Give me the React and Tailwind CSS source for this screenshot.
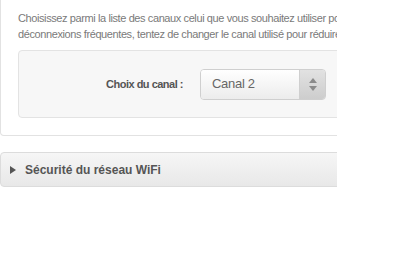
import React from 'react';

const App = () => {
  return (
    <div className="w-[400px] h-[280px] bg-white font-['Liberation_Sans',Arial,sans-serif]">
      <div className="w-[337px] overflow-hidden">
        <div className="w-[560px]">
          {/* Canal panel */}
          <div className="border border-t-0 border-[#e2e2e2] rounded-b-[4px] px-[17px] pt-[10px] pb-[17px]">
            <p className="text-[11px] tracking-[-0.4px] leading-[16px] text-[#7a7a7a] whitespace-nowrap">
              Choisissez parmi la liste des canaux celui que vous souhaitez utiliser pour votre réseau WiFi. En cas de
            </p>
            <p className="text-[11px] tracking-[-0.4px] leading-[16px] text-[#7a7a7a] whitespace-nowrap">
              déconnexions fréquentes, tentez de changer le canal utilisé pour réduire les interférences.
            </p>
            <div className="mt-[8px] h-[68px] border border-[#e3e3e3] rounded-[4px] bg-[#f7f7f7] flex items-center">
              <label className="w-[164px] text-right text-[11px] tracking-[-0.5px] font-bold text-[#555]">Choix du canal :</label>
              <div className="ml-[17px] w-[126px] h-[31px] flex border border-[#cfcfcf] rounded-[4px] overflow-hidden">
                <div className="flex-1 flex items-center pl-[11px] text-[13px] tracking-[-0.3px] text-[#666] bg-gradient-to-b from-[#ffffff] to-[#ececec]">
                  Canal 2
                </div>
                <div className="w-[26px] flex flex-col items-center justify-center gap-[3px] border-l border-[#cfcfcf] bg-gradient-to-b from-[#e2e2e2] to-[#cdcdcd]">
                  <svg width="8" height="5" viewBox="0 0 8 5"><path d="M4 0L8 5H0Z" fill="#8a8a8a" /></svg>
                  <svg width="8" height="5" viewBox="0 0 8 5"><path d="M0 0H8L4 5Z" fill="#8a8a8a" /></svg>
                </div>
              </div>
            </div>
          </div>

          {/* Sécurité panel */}
          <div className="mt-[16px] h-[35px] border border-[#dcdcdc] rounded-[4px] bg-gradient-to-b from-[#f6f6f6] to-[#e8e8e8] flex items-center pl-[9px]">
            <svg width="6" height="8" viewBox="0 0 6 8" className="mr-[9px]"><path d="M0 0L6 4L0 8Z" fill="#555" /></svg>
            <span className="text-[12px] font-bold text-[#555]">Sécurité du réseau WiFi</span>
          </div>
        </div>
      </div>
    </div>
  );
};

export default App;
